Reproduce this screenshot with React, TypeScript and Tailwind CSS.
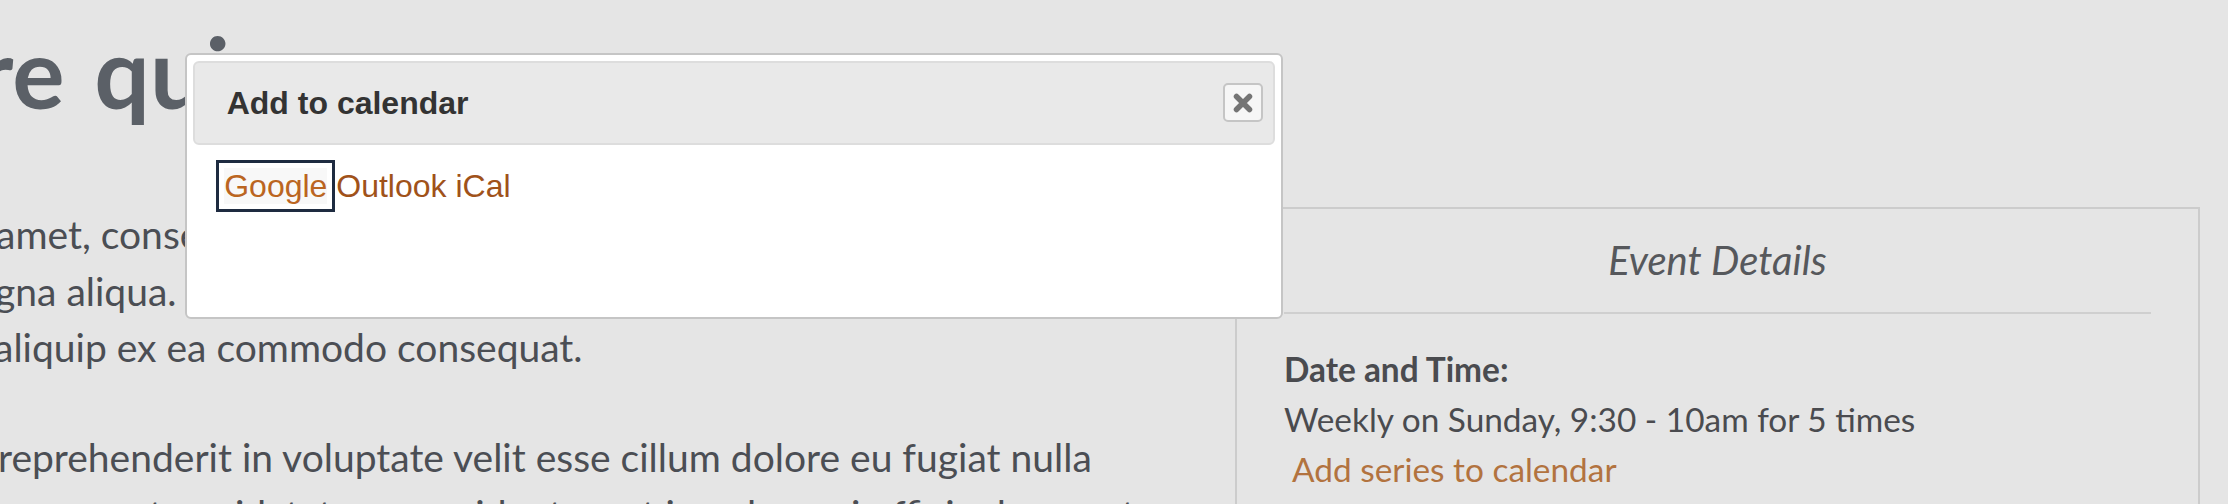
import React from "react";

// Lines of the article as they appear in the cropped view (the column starts off-screen)
const firstParagraph = [
  { text: "amet, consectetur adipiscing elit, sed do eiusmod tempor incididunt", shift: "ml-[-4px]" },
  { text: "gna aliqua. Ut enim ad minim veniam, quis nostrud exercitation", shift: "ml-[-5px]" },
  { text: "aliquip ex ea commodo consequat.", shift: "ml-[-6px]" },
];

const secondParagraph = [
  { text: "reprehenderit in voluptate velit esse cillum dolore eu fugiat nulla", shift: "ml-[-2px]" },
  { text: "occaecat cupidatat non proident, sunt in culpa qui officia deserunt", shift: "ml-[12px]" },
];

const CloseIcon: React.FC = () => (
  <svg width="20" height="20" viewBox="0 0 20 20" aria-hidden="true">
    <path d="M3.5 3.5 L16.5 16.5 M16.5 3.5 L3.5 16.5" stroke="#747474" strokeWidth="5.5" strokeLinecap="round" />
  </svg>
);

// Диалог "Add to calendar" поверх страницы
const CalendarDialog: React.FC = () => (
  <div className="absolute left-[184.7px] top-[52.7px] flex h-[266.6px] w-[1098.6px] flex-col rounded-[6px] border-2 border-[#c5c5c5] bg-white p-[6px] font-['Liberation_Sans',Arial,sans-serif]">
    <div className="flex h-[84.3px] shrink-0 items-center justify-between rounded-[6px] border-2 border-[#dddddd] bg-[#e9e9e9] pl-[32px] pr-[10px]">
      <span className="text-[32px] font-bold text-[#333333]">Add to calendar</span>
      <button
        className="flex h-[39px] w-[40px] items-center justify-center rounded-[5px] border-2 border-[#c5c5c5] bg-[#f6f6f6]"
        title="Close"
      >
        <CloseIcon />
      </button>
    </div>
    <div className="pl-[31.5px] pt-[22.7px] text-[32px] leading-[37px] whitespace-nowrap">
      <a href="#" className="bg-[#f8f8f8] text-[#bb6521] [outline:3px_solid_#1e2b40] outline-offset-[5px]">
        Google
      </a>{" "}
      <a href="#" className="text-[#a0521a]">
        Outlook
      </a>{" "}
      <a href="#" className="text-[#a0521a]">
        iCal
      </a>
    </div>
  </div>
);

export default function App() {
  return (
    <div className="relative flex h-[504px] w-[2228px] overflow-hidden bg-[#e5e5e5] font-['Lato',sans-serif]">
      <main className="w-[1235px] shrink-0">
        <h1 className="ml-[-23px] mt-[22px] whitespace-nowrap text-[98px] font-bold leading-none text-[#5b6067] [word-spacing:6px]">
          re qui cons
        </h1>
        <div className="mt-[86px] text-[39px] leading-[56.7px] text-[#4b4e54]">
          <p>
            {firstParagraph.map((line, i) => (
              <span key={i} className={`block whitespace-nowrap ${line.shift}`}>
                {line.text}
              </span>
            ))}
          </p>
          <p className="mt-[53px]">
            {secondParagraph.map((line, i) => (
              <span key={i} className={`block whitespace-nowrap ${line.shift}`}>
                {line.text}
              </span>
            ))}
          </p>
        </div>
      </main>

      <aside className="mt-[207px] h-[320px] w-[965px] shrink-0 border-2 border-[#cccccc] px-[47px] pt-[25.5px]">
        <h2 className="text-center text-[40px] italic leading-[50px] text-[#56585c]">Event Details</h2>
        <div className="mt-[27px] h-[2px] bg-[#cfcfcf]" />
        <div className="mt-[30px] text-[33.4px] leading-[50px] text-[#4a4b4f]">
          <div className="font-bold">Date and Time:</div>
          <div>Weekly on Sunday, 9:30 - 10am for 5 times</div>
          <a href="#" className="ml-[8px] text-[#b2733f]">
            Add series to calendar
          </a>
        </div>
      </aside>

      <CalendarDialog />
    </div>
  );
}
